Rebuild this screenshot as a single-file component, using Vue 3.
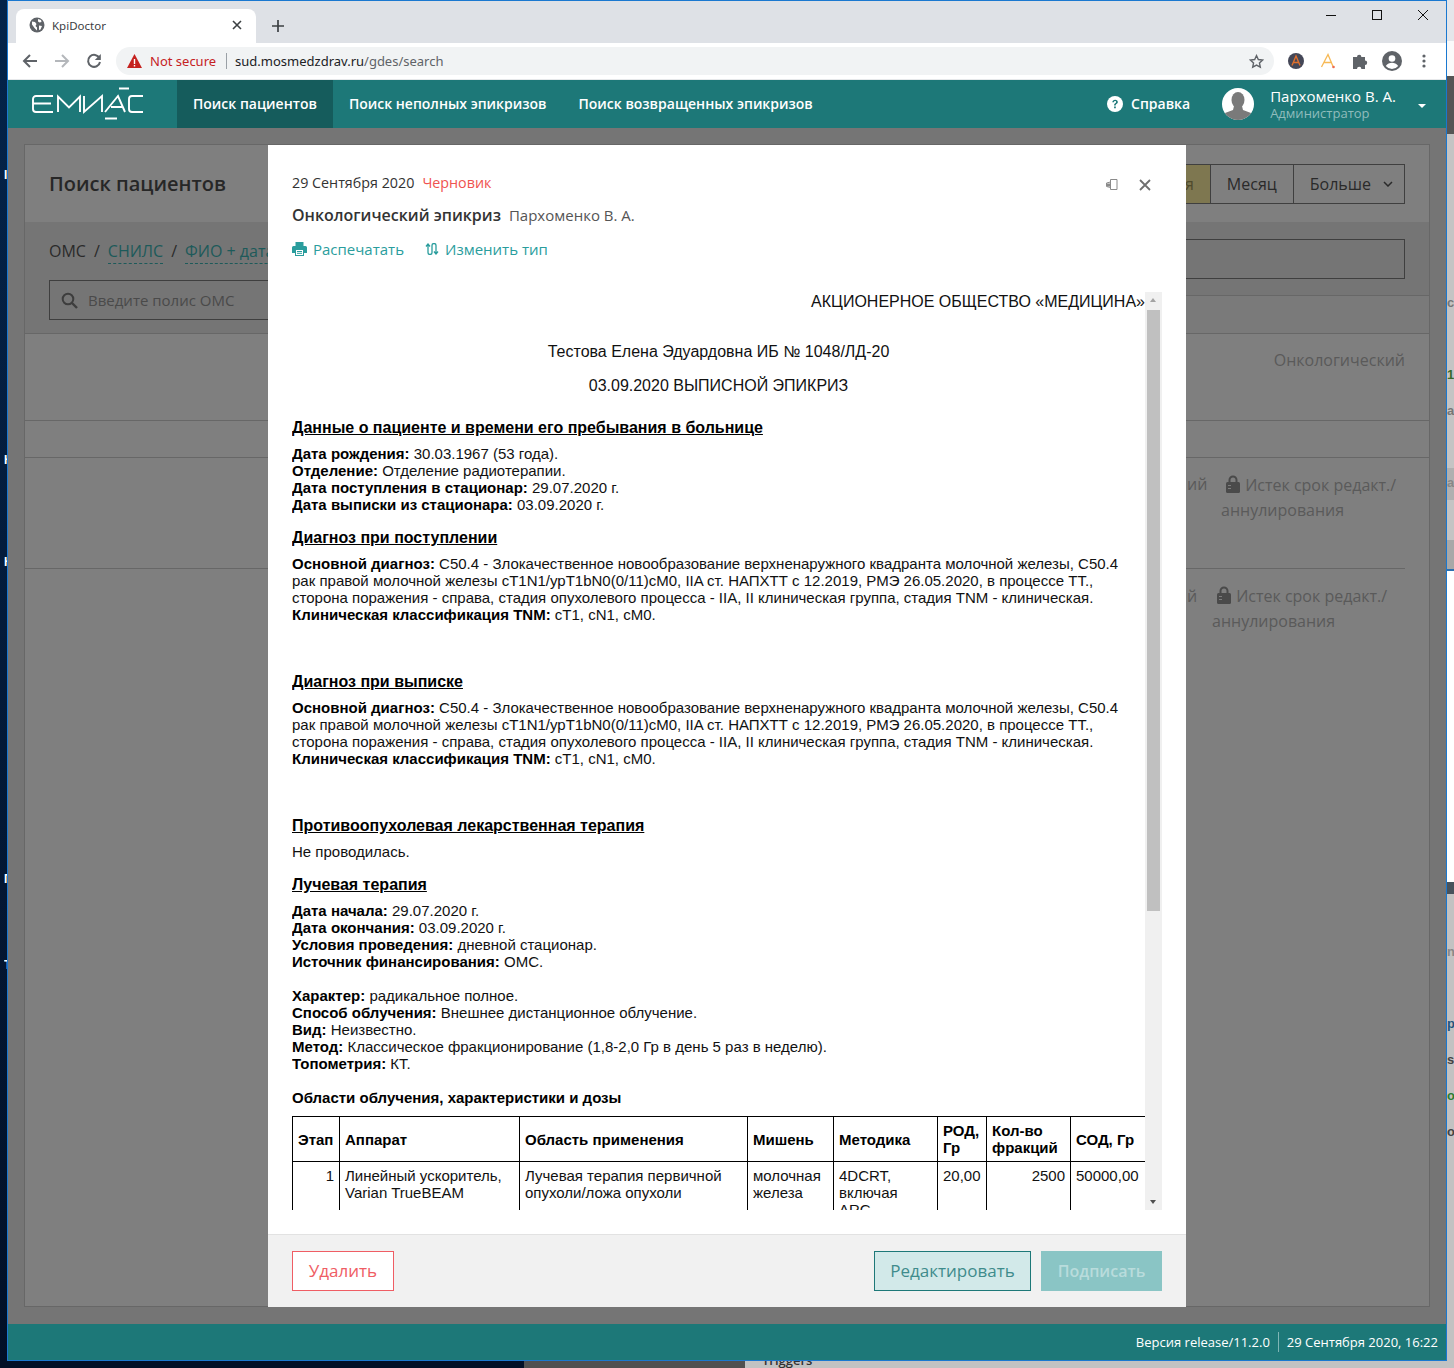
<template>
  <div class="desktop">
    <div class="strip">
      <div v-for="(band, i) in strip" :key="i" :style="{ height: band.h + 'px', background: band.c }"></div>
      <span v-for="f in stripTexts" :key="f.y" class="strip-text" :style="{ top: f.y + 'px', color: f.c }">{{ f.t }}</span>
    </div>
    <div class="bottom-strip">
      <div class="bs-navy"></div>
      <div class="bs-dark"></div>
      <div class="bs-light"><span>Triggers</span></div>
    </div>
    <span v-for="m in leftMarks" :key="m.y" class="left-mark" :style="{ top: m.y + 'px' }">{{ m.t }}</span>

    <div class="window">
      <div class="tabbar">
        <div class="tab">
          <svg class="globe" width="16" height="16" viewBox="0 0 16 16"><circle cx="8" cy="8" r="7.500" fill="#5f6368"/><path d="M3 4.500l3 .5 1.500 2-1 2 1.500 1.500v3L5.500 11 3 7.500zM9 2l3 1 .5 2-2 .5L9 4.500zM10 8.500l3 .5-1.500 3.500-1.500 .5z" fill="#fff"/></svg>
          <span class="tab-title">KpiDoctor</span>
          <svg class="tab-x" width="10" height="10" viewBox="0 0 10 10"><path d="M1 1l8 8M9 1l-8 8" stroke="#3c4043" stroke-width="1.600"/></svg>
        </div>
        <svg class="tab-plus" width="14" height="14" viewBox="0 0 14 14"><path d="M7 1v12M1 7h12" stroke="#3c4043" stroke-width="1.700"/></svg>
        <div class="win-controls">
          <svg width="12" height="12" viewBox="0 0 12 12"><path d="M1 6.500h10" stroke="#111" stroke-width="1"/></svg>
          <svg width="12" height="12" viewBox="0 0 12 12"><rect x="1.500" y="1.500" width="9" height="9" fill="none" stroke="#111" stroke-width="1"/></svg>
          <svg width="12" height="12" viewBox="0 0 12 12"><path d="M1 1l10 10M11 1L1 11" stroke="#111" stroke-width="1"/></svg>
        </div>
      </div>

      <div class="toolbar">
        <svg class="nav" width="16" height="16" viewBox="0 0 16 16"><path d="M15 8H2M8 2L2 8l6 6" fill="none" stroke="#5f6368" stroke-width="2"/></svg>
        <svg class="nav" width="16" height="16" viewBox="0 0 16 16"><path d="M1 8h13M8 2l6 6-6 6" fill="none" stroke="#b4b7bb" stroke-width="2"/></svg>
        <svg class="nav" width="16" height="16" viewBox="0 0 16 16"><path d="M13.500 5.200A6 6 0 1 0 14 9" fill="none" stroke="#5f6368" stroke-width="2"/><path d="M14.800 1v6h-6z" fill="#5f6368"/></svg>
        <div class="omnibox">
          <svg width="15" height="14" viewBox="0 0 15 14"><path d="M7.500 0L15 14H0z" fill="#c5221f"/><path d="M6.800 5h1.400v5H6.800zM6.800 11h1.400v1.400H6.800z" fill="#fff"/></svg>
          <span class="not-secure">Not secure</span>
          <span class="omni-sep"></span>
          <span class="url">sud.mosmedzdrav.ru<span class="url-path">/gdes/search</span></span>
          <svg class="star" width="15" height="15" viewBox="0 0 24 24"><path d="M12 2.500l2.900 6.300 6.900.8-5.100 4.700 1.400 6.800-6.100-3.400-6.100 3.400 1.400-6.800L2.200 9.600l6.900-.8z" fill="none" stroke="#5f6368" stroke-width="2.200"/></svg>
        </div>
        <div class="extensions">
          <span class="ext"><svg width="16" height="16" viewBox="0 0 16 16"><circle cx="8" cy="8" r="8" fill="#444757"/><path d="M4 12.500L8 3l4 9.500M5.500 9.500h5" fill="none" stroke="#e0702c" stroke-width="1.400"/></svg></span>
          <span class="ext"><svg width="16" height="16" viewBox="0 0 16 16"><path d="M1.500 14L8 1.500 13 13.500M4 9.500h8" fill="none" stroke="#f7b955" stroke-width="1.300"/><circle cx="13.500" cy="14" r="1.300" fill="#ee6c4d"/></svg></span>
          <span class="ext"><svg width="16" height="16" viewBox="0 0 16 16"><path d="M1 4h4a2.200 2.200 0 1 1 4.400 0H13v3.600a2.200 2.200 0 1 1 0 4.400V16H9.400a2.200 2.200 0 1 0-4.400 0H1z" fill="#5f6368"/></svg></span>
          <span class="ext"><svg width="20" height="20" viewBox="0 0 20 20"><circle cx="10" cy="10" r="10" fill="#5f6368"/><circle cx="10" cy="7.500" r="3.300" fill="#fff"/><path d="M3.800 15c1.500-2.500 4-3.200 6.200-3.200s4.700.7 6.200 3.200a8 8 0 0 1-12.400 0z" fill="#fff"/></svg></span>
          <span class="ext"><svg width="4" height="14" viewBox="0 0 4 14"><circle cx="2" cy="2" r="1.600" fill="#5f6368"/><circle cx="2" cy="7" r="1.600" fill="#5f6368"/><circle cx="2" cy="12" r="1.600" fill="#5f6368"/></svg></span>
        </div>
      </div>

      <header class="app-header">
        <svg class="logo" width="113" height="34" viewBox="0 0 113 34">
          <g fill="none" stroke="#fff" stroke-width="1.900">
            <path d="M22 9H5a3 3 0 0 0-3 3v10a3 3 0 0 0 3 3h17M2 16.500h18"/>
            <path d="M27 25V9.500l11 11 11-11V25"/>
            <path d="M53 9v16L71 9v16"/>
            <path d="M74 25L87 9l7 16M80 20h12"/>
            <path d="M112 9H101a3 3 0 0 0-3 3v10a3 3 0 0 0 3 3h11"/>
            <path d="M88 1.500h10M74 31.500h12"/>
          </g>
        </svg>
        <a class="nav-item active">Поиск пациентов</a>
        <a class="nav-item">Поиск неполных эпикризов</a>
        <a class="nav-item">Поиск возвращенных эпикризов</a>
        <div class="header-right">
          <svg width="16" height="16" viewBox="0 0 16 16"><circle cx="8" cy="8" r="8" fill="#fff"/><path d="M5.300 6.200C5.400 4.600 6.600 3.700 8.100 3.700c1.600 0 2.700 1 2.700 2.200 0 1-.5 1.500-1.300 2-.7.500-.8.800-.8 1.500H7.100c0-1.100.3-1.700 1.100-2.200.6-.4.900-.7.900-1.200s-.4-.9-1-.9-1.100.4-1.100 1.100zM7.100 10.500h1.700v1.700H7.100z" fill="#1d7878"/></svg>
          <span class="help">Справка</span>
          <svg class="avatar" width="32" height="32" viewBox="0 0 32 32">
            <defs><clipPath id="avatar-clip"><circle cx="16" cy="16" r="16"/></clipPath></defs>
            <circle cx="16" cy="16" r="16" fill="#fff"/>
            <g clip-path="url(#avatar-clip)" fill="#7a7a7a">
              <ellipse cx="16" cy="12" rx="6.500" ry="8"/>
              <path d="M12 18h8l1 4 8 3 2 7H1l2-7 8-3z"/>
            </g>
          </svg>
          <div class="user">
            <div class="user-name">Пархоменко В. А.</div>
            <div class="user-role">Администратор</div>
          </div>
          <span class="caret"></span>
        </div>
      </header>

      <main class="app-main">
        <section class="panel">
          <div class="panel-head">
            <h1>Поиск пациентов</h1>
            <div class="periods">
              <span class="period selected">я</span>
              <span class="period month">Месяц</span>
              <span class="period more">Больше
                <svg width="10" height="6" viewBox="0 0 10 6"><path d="M1 1l4 4 4-4" fill="none" stroke="#2a2a2a" stroke-width="1.500"/></svg>
              </span>
            </div>
          </div>
          <div class="search-area">
            <div class="search-left">
              <div class="search-tabs">
                <span>ОМС</span><span>/</span><span class="dashed">СНИЛС</span><span>/</span><span class="dashed">ФИО + дата рождения</span>
              </div>
              <div class="search-input">
                <svg width="17" height="17" viewBox="0 0 17 17"><circle cx="7" cy="7" r="5.300" fill="none" stroke="#3d3d3d" stroke-width="2"/><path d="M11 11l5 5" stroke="#3d3d3d" stroke-width="2.400"/></svg>
                <span>Введите полис ОМС</span>
              </div>
            </div>
            <div class="search-right">
              <div class="right-box"></div>
              <div class="right-band"></div>
            </div>
          </div>
          <div class="result-rows">
            <div class="r-row r2"><span>Онкологический</span></div>
            <div class="r-row r3"></div>
            <div class="r-row r4">
              <span class="r-tail">ий</span>
              <div class="locked">
                <svg width="14" height="18" viewBox="0 0 14 18"><path d="M3.500 8V5a3.500 3.500 0 0 1 7 0v3" fill="none" stroke="#4a4a4a" stroke-width="2"/><rect y="7" width="14" height="11" rx="1.500" fill="#4a4a4a"/><path d="M2 10.500h3M2 13.500h3" stroke="#7c7c7c" stroke-width="1"/></svg>
                Истек срок редакт./<br>аннулирования
              </div>
            </div>
            <div class="r-row r5">
              <span class="r-tail">й</span>
              <div class="locked">
                <svg width="14" height="18" viewBox="0 0 14 18"><path d="M3.500 8V5a3.500 3.500 0 0 1 7 0v3" fill="none" stroke="#4a4a4a" stroke-width="2"/><rect y="7" width="14" height="11" rx="1.500" fill="#4a4a4a"/><path d="M2 10.500h3M2 13.500h3" stroke="#7c7c7c" stroke-width="1"/></svg>
                Истек срок редакт./<br>аннулирования
              </div>
            </div>
          </div>
        </section>

        <div class="modal">
          <div class="modal-top">
            <div class="modal-meta">
              <span class="m-date">29 Сентября 2020</span>
              <span class="m-status">Черновик</span>
              <svg class="m-speaker" width="13" height="12" viewBox="0 0 13 12"><path d="M5.500 .5h6.500v10H5.500zM5.500 3L1.500 4v3.500l4 1" fill="none" stroke="#8a8a8a" stroke-width="1"/><path d="M2 4.500h3v3H2z" fill="#8a8a8a"/></svg>
              <svg class="m-close" width="12" height="12" viewBox="0 0 12 12"><path d="M1 1l10 10M11 1L1 11" stroke="#6f6f6f" stroke-width="1.800"/></svg>
            </div>
            <div class="modal-title"><b>Онкологический эпикриз</b><span>Пархоменко В. А.</span></div>
            <div class="modal-actions">
              <a>
                <svg width="15" height="14" viewBox="0 0 15 14"><path d="M3.500 0h8v4h-8z" fill="#2a9d9d"/><path d="M1.500 4h12A1.500 1.500 0 0 1 15 5.500V11h-3v3H3v-3H0V5.500A1.500 1.500 0 0 1 1.500 4z" fill="#2a9d9d"/><path d="M4 8h7v5H4z" fill="#fff"/><path d="M5 9.500h5M5 11.300h5" stroke="#2a9d9d"/></svg>
                Распечатать
              </a>
              <a>
                <svg width="14" height="12" viewBox="0 0 14 12"><path d="M3 1v8.500a2 2 0 0 0 4 0v-7a2 2 0 0 1 4 0V11M1 3.500L3 1l2 2.500M9 8.500L11 11l2-2.500" fill="none" stroke="#2a9d9d" stroke-width="1.300"/></svg>
                Изменить тип
              </a>
            </div>
          </div>

          <div class="doc-wrap">
            <div class="doc">
              <p class="org">АКЦИОНЕРНОЕ ОБЩЕСТВО «МЕДИЦИНА»</p>
              <p class="center first">Тестова Елена Эдуардовна ИБ № 1048/ЛД-20</p>
              <p class="center second">03.09.2020 ВЫПИСНОЙ ЭПИКРИЗ</p>

              <h3 class="h-first">Данные о пациенте и времени его пребывания в больнице</h3>
              <p><b>Дата рождения:</b> 30.03.1967 (53 года).<br><b>Отделение:</b> Отделение радиотерапии.<br><b>Дата поступления в стационар:</b> 29.07.2020 г.<br><b>Дата выписки из стационара:</b> 03.09.2020 г.</p>

              <h3>Диагноз при поступлении</h3>
              <p><b>Основной диагноз:</b> C50.4 - Злокачественное новообразование верхненаружного квадранта молочной железы, C50.4<br>рак правой молочной железы сТ1N1/урT1bN0(0/11)cM0, IIA ст. НАПХТТ с 12.2019, РМЭ 26.05.2020, в процессе ТТ.,<br>сторона поражения - справа, стадия опухолевого процесса - IIA, II клиническая группа, стадия TNM - клиническая.<br><b>Клиническая классификация TNM:</b> сT1, сN1, сM0.</p>

              <h3 class="h-gap">Диагноз при выписке</h3>
              <p><b>Основной диагноз:</b> C50.4 - Злокачественное новообразование верхненаружного квадранта молочной железы, C50.4<br>рак правой молочной железы сТ1N1/урT1bN0(0/11)cM0, IIA ст. НАПХТТ с 12.2019, РМЭ 26.05.2020, в процессе ТТ.,<br>сторона поражения - справа, стадия опухолевого процесса - IIA, II клиническая группа, стадия TNM - клиническая.<br><b>Клиническая классификация TNM:</b> сT1, сN1, сM0.</p>

              <h3 class="h-gap">Противоопухолевая лекарственная терапия</h3>
              <p>Не проводилась.</p>

              <h3>Лучевая терапия</h3>
              <p><b>Дата начала:</b> 29.07.2020 г.<br><b>Дата окончания:</b> 03.09.2020 г.<br><b>Условия проведения:</b> дневной стационар.<br><b>Источник финансирования:</b> ОМС.</p>
              <p class="block"><b>Характер:</b> радикальное полное.<br><b>Способ облучения:</b> Внешнее дистанционное облучение.<br><b>Вид:</b> Неизвестно.<br><b>Метод:</b> Классическое фракционирование (1,8-2,0 Гр в день 5 раз в неделю).<br><b>Топометрия:</b> КТ.</p>
              <p class="block"><b>Области облучения, характеристики и дозы</b></p>

              <table>
                <colgroup>
                  <col v-for="(w, i) in colWidths" :key="i" :style="{ width: w + 'px' }">
                </colgroup>
                <tr>
                  <th>Этап</th><th>Аппарат</th><th>Область применения</th><th>Мишень</th><th>Методика</th><th>РОД, Гр</th><th>Кол-во фракций</th><th>СОД, Гр</th>
                </tr>
                <tr>
                  <td class="num">1</td>
                  <td>Линейный ускоритель, Varian TrueBEAM</td>
                  <td>Лучевая терапия первичной опухоли/ложа опухоли</td>
                  <td>молочная железа</td>
                  <td>4DCRT,<br>включая<br>ARC<br>&nbsp;</td>
                  <td>20,00</td>
                  <td class="num">2500</td>
                  <td>50000,00</td>
                </tr>
              </table>
            </div>
            <div class="scrollbar">
              <span class="arrow up"></span>
              <div class="thumb"></div>
              <span class="arrow down"></span>
            </div>
          </div>

          <div class="modal-footer">
            <button class="btn-delete">Удалить</button>
            <button class="btn-edit">Редактировать</button>
            <button class="btn-sign">Подписать</button>
          </div>
        </div>
      </main>

      <footer class="app-footer">
        <span>Версия release/11.2.0</span>
        <span class="f-sep"></span>
        <span>29 Сентября 2020, 16:22</span>
      </footer>
    </div>
  </div>
</template>

<script setup>
const colWidths = [47, 180, 228, 86, 104, 49, 84, 75]

const leftMarks = [
  { y: 168, t: 'I' },
  { y: 453, t: 'Н' },
  { y: 555, t: 'Н' },
  { y: 872, t: 'Г' },
  { y: 958, t: 'Т' },
]

// the sliver of the window behind, on the right edge
const strip = [
  { h: 41, c: '#e4e6ea' },
  { h: 35, c: '#fafafa' },
  { h: 58, c: '#555555' },
  { h: 334, c: '#c4c4c4' },
  { h: 32, c: '#b0b0b0' },
  { h: 40, c: '#c4c4c4' },
  { h: 29, c: '#a8a8a8' },
  { h: 2, c: '#2a6fb0' },
  { h: 311, c: '#ffffff' },
  { h: 12, c: '#47525c' },
  { h: 474, c: '#c2c2c2' },
]

const stripTexts = [
  { y: 296, t: 'co', c: '#777' },
  { y: 368, t: '10', c: '#3a6a2a' },
  { y: 404, t: 'at', c: '#777' },
  { y: 476, t: 'at', c: '#888' },
  { y: 945, t: 'nc', c: '#888' },
  { y: 1017, t: 'p', c: '#24557f' },
  { y: 1053, t: 's', c: '#444' },
  { y: 1089, t: 'o', c: '#2e7d32' },
  { y: 1125, t: 'or', c: '#444' },
]
</script>

<style>
html, body { margin: 0; padding: 0; }
</style>

<style scoped>
.desktop {
  position: relative;
  width: 1454px;
  height: 1368px;
  overflow: hidden;
  background: linear-gradient(#04244a, #021027);
  font-family: "Open Sans", "Noto Sans", sans-serif;
}
.strip { position: absolute; top: 0; right: 0; width: 7px; overflow: hidden; height: 1368px; }
.strip-text { position: absolute; left: 0; font: 700 13px/14px "Liberation Sans", sans-serif; }
.bottom-strip { position: absolute; left: 0; right: 0; bottom: 0; height: 7px; display: flex; font-size: 13px; }
.bs-navy { width: 524px; background: #021027; }
.bs-dark { width: 221px; background: #505050; }
.bs-light { flex: 1; background: #c2c2c2; overflow: hidden; line-height: 12px; padding-left: 17px; color: #333; font-weight: 600; }
.bs-light span { position: relative; top: -7px; }
.left-mark { position: absolute; left: 4px; width: 3px; overflow: hidden; font: 700 12px "Liberation Sans", sans-serif; color: #fff; }

.window {
  position: absolute;
  left: 7px;
  top: 0;
  width: 1438px;
  height: 1359px;
  border: 1px solid #1a78d0;
  display: flex;
  flex-direction: column;
  background: #777;
}

.tabbar {
  height: 42px;
  background: #dee1e6;
  display: flex;
  align-items: flex-end;
  position: relative;
  flex: none;
}
.tab {
  width: 240px;
  height: 34px;
  margin-left: 8px;
  background: #fff;
  border-radius: 8px 8px 0 0;
  display: flex;
  align-items: center;
  box-sizing: border-box;
  padding: 0 14px 2px 13px;
  font: 11.500px "Noto Sans", sans-serif;
  color: #3c4043;
}
.globe { margin-right: 7px; flex: none; }
.tab-title { flex: 1; }
.tab-plus { margin: 0 0 10px 15px; }
.win-controls {
  position: absolute;
  right: 17px;
  top: 8px;
  display: flex;
  gap: 34px;
}

.toolbar {
  height: 37px;
  flex: none;
  background: #fff;
  border-bottom: 1px solid #e6e8ea;
  box-sizing: border-box;
  display: flex;
  align-items: center;
  padding-left: 14px;
  gap: 16px;
}
.nav { flex: none; }
.omnibox {
  width: 1158px;
  height: 28px;
  margin-left: -2px;
  border-radius: 14px;
  background: #f1f3f4;
  display: flex;
  align-items: center;
  padding: 0 10px 0 11px;
  box-sizing: border-box;
  font: 13px "Noto Sans", sans-serif;
  color: #202124;
  flex: none;
}
.not-secure { color: #c5221f; margin-left: 8px; }
.omni-sep { width: 1px; height: 16px; background: #9aa0a6; margin: 0 8px 0 10px; }
.url-path { color: #5f6368; }
.star { margin-left: auto; }
.extensions { display: flex; align-items: center; margin-left: -10px; }
.ext { width: 32px; display: flex; justify-content: center; }

.app-header {
  height: 48px;
  flex: none;
  background: #1d7878;
  display: flex;
  align-items: stretch;
  color: #fff;
  font-size: 14px;
  font-weight: 600;
}
.logo { margin: 7px 33px 0 23px; flex: none; }
.nav-item { padding: 0 16px 2px; display: flex; align-items: center; }
.nav-item.active { background: #155c5c; }
.header-right {
  margin-left: auto;
  display: flex;
  align-items: center;
  padding-right: 20px;
}
.help { margin: 0 32px 0 8px; padding-bottom: 1px; }
.avatar { flex: none; }
.user { margin: 0 22px 0 16px; font-weight: 400; padding-bottom: 1px; }
.user-name { font-size: 15px; line-height: 18px; }
.user-role { font-size: 13px; line-height: 16px; color: #8fbcbc; }
.caret { width: 0; height: 0; border: 4px solid transparent; border-top-color: #fff; border-bottom: 0; margin-top: 3px; }

.app-main {
  flex: 1;
  position: relative;
  background: #757575;
  padding: 16px 16px 17px 16px;
  min-height: 0;
  display: flex;
}
.panel {
  flex: 1;
  border: 1px solid #676767;
  background: #7f7f7f;
  color: #2a2a2a;
  font-size: 16px;
}
.panel-head {
  height: 77px;
  box-sizing: border-box;
  display: flex;
  align-items: center;
  justify-content: space-between;
  padding: 0 24px;
}
.panel-head h1 { margin: 0; font-size: 20px; font-weight: 600; color: #272727; }
.periods { display: flex; height: 40px; border: 1px solid #3f3f3f; box-sizing: border-box; }
.period { display: flex; align-items: center; padding: 0 16px; }
.period.selected { background: #7e7750; color: #4f4a2c; }
.period.month { border-left: 1px solid #3f3f3f; border-right: 1px solid #3f3f3f; }
.period.more { padding-right: 11px; }
.more svg { margin-left: 12px; }

.search-area {
  height: 111px;
  background: #757575;
  display: flex;
  justify-content: space-between;
  box-sizing: border-box;
}
.search-left { width: 220px; margin-left: 24px; padding-top: 18px; overflow: hidden; }
.search-tabs { height: 40px; display: flex; gap: 8px; line-height: 22px; white-space: nowrap; }
.dashed { color: #1d5a5a; border-bottom: 1px dashed #1d5a5a; height: 23px; }
.search-input {
  width: 400px;
  height: 40px;
  border: 1px solid #3f3f3f;
  box-sizing: border-box;
  display: flex;
  align-items: center;
  padding-left: 11px;
  gap: 10px;
  font-size: 15px;
  color: #4a4a4a;
}
.search-right { width: 500px; display: flex; flex-direction: column; }
.right-box { height: 40px; margin: 17px 24px 16px 0; border: 1px solid #3f3f3f; box-sizing: border-box; flex: none; }
.right-band { flex: 1; border-top: 1px solid #676767; background: #7a7a7a; }

.result-rows { color: #5a5a5a; }
.r-row { border-top: 1px solid #676767; box-sizing: border-box; position: relative; }
.r2 { height: 87px; text-align: right; padding: 15px 24px 0 0; }
.r3 { height: 37px; }
.r4 { height: 111px; }
.r5 { height: 111px; margin-right: 24px; }
.r-tail { position: absolute; top: 15px; }
.r4 .r-tail { left: 1162px; }
.r5 .r-tail { left: 1162px; top: 16px; }
.locked { position: absolute; line-height: 25px; white-space: nowrap; }
.locked svg { vertical-align: -2px; margin: 0 1px 0 5px; }
.r4 .locked { left: 1196px; top: 15px; }
.r5 .locked { left: 1187px; top: 15px; }

.modal {
  position: absolute;
  left: 260px;
  top: 17px;
  width: 918px;
  height: 1162px;
  background: #fff;
  display: flex;
  flex-direction: column;
}
.modal-top { padding: 0 24px; height: 147px; flex: none; box-sizing: border-box; }
.modal-meta {
  padding-top: 27px;
  height: 20px;
  display: flex;
  align-items: center;
  font-size: 14.300px;
  color: #333;
  position: relative;
}
.m-status { color: #ef5350; margin-left: 8px; }
.m-speaker { position: absolute; left: 813px; top: 34px; }
.m-close { position: absolute; left: 847px; top: 34px; }
.modal-title { margin-top: 13px; height: 20px; display: flex; align-items: center; font-size: 15px; color: #555; }
.modal-title b { font-size: 16px; font-weight: 600; color: #333; margin-right: 8px; }
.modal-actions { margin-top: 14px; display: flex; gap: 21px; font-size: 15px; color: #2a9d9d; }
.modal-actions a { display: flex; align-items: center; gap: 6px; }

.doc-wrap {
  height: 918px;
  flex: none;
  margin: 0 24px;
  overflow: hidden;
  display: flex;
}
.doc {
  width: 853px;
  flex: none;
  padding-top: 1px;
  font: 15px/17px "Liberation Sans", Arial, sans-serif;
  color: #111;
}
.doc p { margin: 0; }
.doc b { color: #000; }
.doc .org { font-size: 16px; line-height: 18px; text-align: right; }
.doc .center { font-size: 16px; line-height: 18px; text-align: center; }
.doc .first { margin-top: 32px; }
.doc .second { margin-top: 16px; }
.doc h3 { margin: 16px 0 8px; font-size: 16px; line-height: 18px; font-weight: 700; text-decoration: underline; color: #000; }
.doc h3.h-first { margin-top: 24px; }
.doc h3.h-gap { margin-top: 50px; }
.doc .block { margin-top: 17px; }
table {
  margin-top: 10px;
  width: 853px;
  border-collapse: collapse;
  table-layout: fixed;
}
th, td {
  border: 1px solid #000;
  padding: 5px;
  font-size: 15px;
  line-height: 17px;
  text-align: left;
  vertical-align: top;
  color: #111;
}
th { vertical-align: middle; color: #000; }
td.num { text-align: right; }

.scrollbar {
  width: 17px;
  flex: none;
  background: #f0f0f0;
  position: relative;
}
.thumb { position: absolute; left: 2px; top: 18px; width: 13px; height: 601px; background: #c0c0c0; }
.arrow { position: absolute; left: 5px; width: 0; height: 0; border: 3.500px solid transparent; }
.arrow.up { top: 6px; border-top: 0; border-bottom: 4px solid #a3a3a3; }
.arrow.down { bottom: 6px; border-bottom: 0; border-top: 4px solid #505050; }

.modal-footer {
  margin-top: 24px;
  flex: 1;
  background: #f1f1f1;
  border-top: 1px solid #e2e2e2;
  display: flex;
  align-items: center;
  padding: 0 24px;
  gap: 10px;
}
.modal-footer button {
  height: 40px;
  font-family: inherit;
  font-size: 17px;
  padding: 0 0 2px;
  border: 1px solid;
  box-sizing: border-box;
}
.modal-footer .btn-delete { border-color: #ef5d64; color: #ef5d64; background: #fff; margin-right: auto; width: 102px; }
.modal-footer .btn-edit { border-color: #1d7878; color: #3f8c8c; background: #d2e9e9; width: 157px; }
.modal-footer .btn-sign { border-color: #8ac5c5; color: #b9dcdc; background: #8ac5c5; font-size: 16px; font-weight: 600; width: 121px; padding: 0; }

.app-footer {
  height: 36px;
  flex: none;
  background: #1d7878;
  color: #fff;
  font-size: 13px;
  display: flex;
  align-items: center;
  justify-content: flex-end;
  padding-right: 8px;
}
.f-sep { width: 1px; height: 20px; background: #7fb5b5; margin: 0 8px; }
</style>
